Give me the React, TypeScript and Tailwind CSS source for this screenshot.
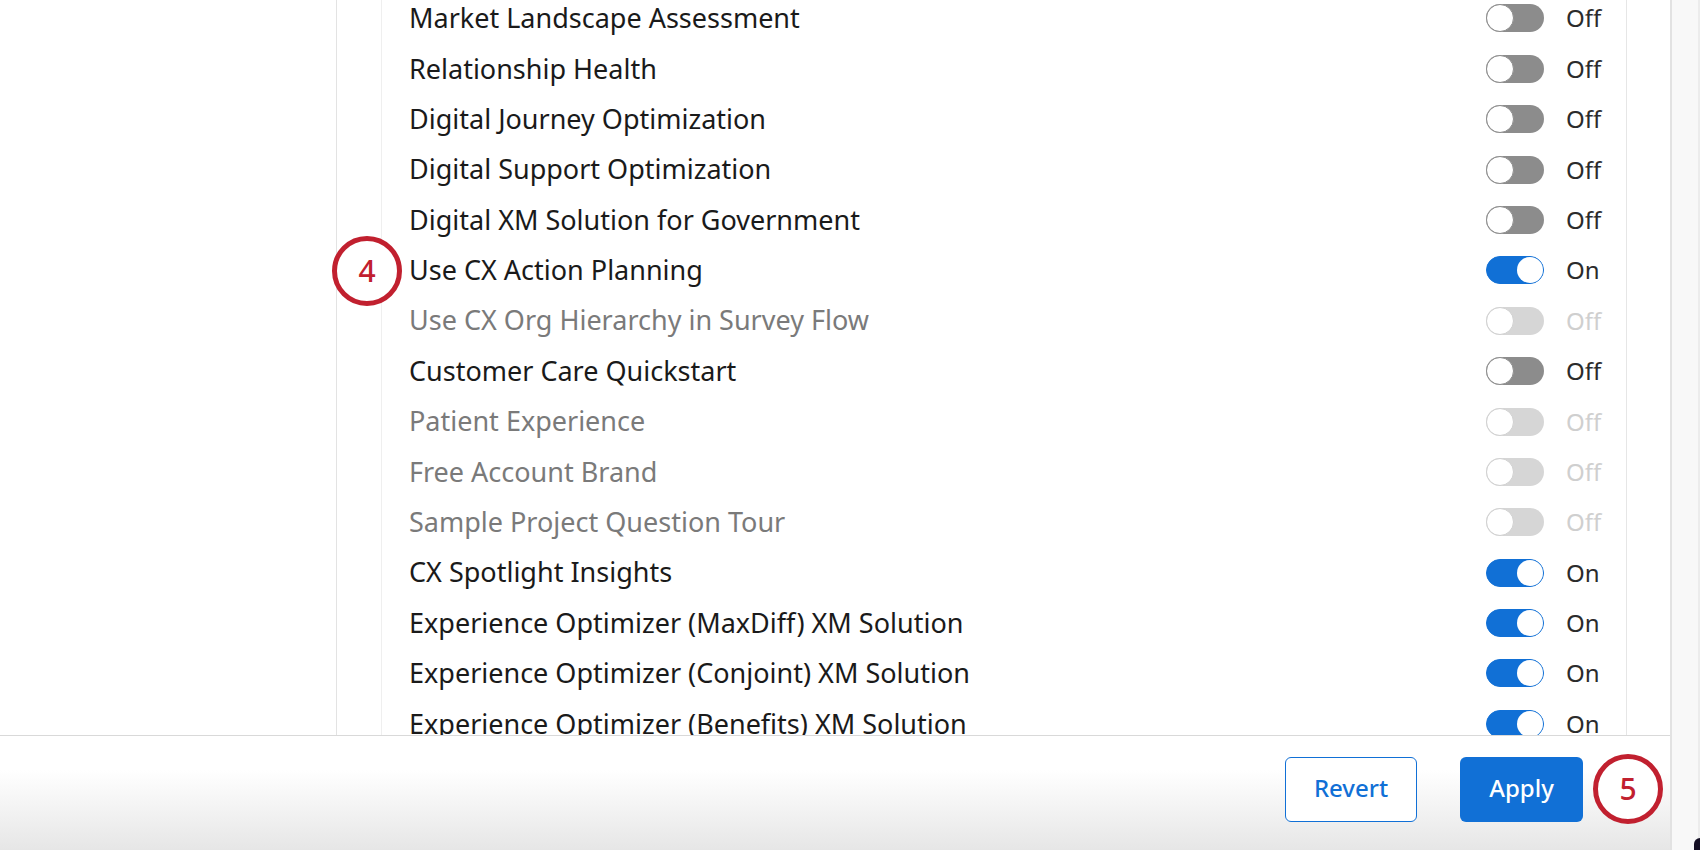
import React from 'react'

type Row = { label: string; state: 'on' | 'off' | 'disabled'; marker?: string }

const rows: Row[] = [
  { label: 'Market Landscape Assessment', state: 'off' },
  { label: 'Relationship Health', state: 'off' },
  { label: 'Digital Journey Optimization', state: 'off' },
  { label: 'Digital Support Optimization', state: 'off' },
  { label: 'Digital XM Solution for Government', state: 'off' },
  { label: 'Use CX Action Planning', state: 'on', marker: '4' },
  { label: 'Use CX Org Hierarchy in Survey Flow', state: 'disabled' },
  { label: 'Customer Care Quickstart', state: 'off' },
  { label: 'Patient Experience', state: 'disabled' },
  { label: 'Free Account Brand', state: 'disabled' },
  { label: 'Sample Project Question Tour', state: 'disabled' },
  { label: 'CX Spotlight Insights', state: 'on' },
  { label: 'Experience Optimizer (MaxDiff) XM Solution', state: 'on' },
  { label: 'Experience Optimizer (Conjoint) XM Solution', state: 'on' },
  { label: 'Experience Optimizer (Benefits) XM Solution', state: 'on' },
]

function Toggle({ state }: { state: Row['state'] }) {
  const on = state === 'on'
  return (
    <div
      className={
        on
          ? 'flex h-[28px] w-[58px] items-center justify-end rounded-full border border-[#1170d6] bg-[#1170d6] p-0'
          : state === 'disabled'
            ? 'flex h-[28px] w-[58px] items-center justify-start rounded-full bg-[#d6d6d6]'
            : 'flex h-[28px] w-[58px] items-center justify-start rounded-full bg-[#8c8c8c]'
      }
    >
      <div
        className={
          state === 'disabled'
            ? 'h-[28px] w-[28px] rounded-full border border-[#d0d0d0] bg-white'
            : on
              ? 'h-[26px] w-[26px] rounded-full bg-white'
              : 'h-[28px] w-[28px] rounded-full border border-[#8c8c8c] bg-white'
        }
      />
    </div>
  )
}

function Marker({ n }: { n: string }) {
  return (
    <div className="flex h-[70px] w-[70px] items-center justify-center rounded-full border-[5px] border-[#c1202f] bg-white pb-[2px] text-[30px] font-medium text-[#c1202f]">
      {n}
    </div>
  )
}

export default function App() {
  return (
    <div
      className="relative h-[850px] w-[1700px] overflow-hidden bg-white text-[#1a1a1a]"
      style={{ fontFamily: '"Noto Sans", "Open Sans", sans-serif' }}
    >
      <div className="flex h-[735px]">
        <div className="w-[337px] flex-none border-r border-[#e3e3e3]" />
        <div className="w-[45px] flex-none border-r border-[#efefef]" />
        <div className="relative w-[1245px] flex-none overflow-hidden border-r border-[#e6e6e6]">
          <ul className="-mt-[6.8px]">
            {rows.map((row) => (
              <li key={row.label} className="flex h-[50.4px] items-center pl-[27px]">
                <span
                  className={
                    row.state === 'disabled'
                      ? 'flex-1 text-[27px] text-[#7a7a7a]'
                      : 'flex-1 text-[27px] text-[#1a1a1a]'
                  }
                >
                  {row.label}
                </span>
                <Toggle state={row.state} />
                <span
                  className={
                    row.state === 'disabled'
                      ? 'w-[82px] pl-[22px] text-[24px] text-[#cfcfcf]'
                      : 'w-[82px] pl-[22px] text-[24px] text-[#2b2b2b]'
                  }
                >
                  {row.state === 'on' ? 'On' : 'Off'}
                </span>
              </li>
            ))}
          </ul>
        </div>
        <div className="w-[43px] flex-none" />
      </div>

      <div className="flex h-[115px] w-[1670px] items-center justify-end border-t border-[#d9d9d9] bg-[linear-gradient(to_bottom,#ffffff_30%,#e6e6e6)] pb-[8px] pr-[7px]">
        <button className="mr-[43px] h-[65px] w-[132px] rounded-[6px] border border-[#1170d6] bg-white pb-[2px] text-[24px] font-medium text-[#1170d6]">
          Revert
        </button>
        <button className="mr-[10px] h-[65px] w-[123px] rounded-[6px] bg-[#1170d6] pb-[2px] text-[24px] font-medium text-white">
          Apply
        </button>
        <Marker n="5" />
      </div>

      <div className="absolute right-0 top-0 flex h-[850px] w-[30px] border-l-2 border-[#e2e2e2] bg-[#f8f8f8]">
        <div className="ml-auto w-[2px] bg-[#ececec]" />
      </div>
      <div className="absolute bottom-0 right-0 h-[12px] w-[6px] rounded-tl-[8px] bg-[#140f24]" />

      <div className="absolute left-[332px] top-[236px]">
        <Marker n="4" />
      </div>
    </div>
  )
}
